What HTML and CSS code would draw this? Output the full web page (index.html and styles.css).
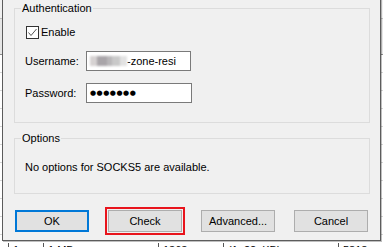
FILE: index.html
```html
<!DOCTYPE html>
<html>
<head>
<meta charset="utf-8">
<link rel="stylesheet" href="styles.css">
</head>
<body>
<div class="desk">
  <div class="bgwin">
    <div class="band top"></div>
    <div class="band mid"></div>
    <div class="row"></div>
    <div class="row"></div>
    <div class="row"></div>
    <div class="row"></div>
    <div class="row"></div>
    <div class="row"></div>
    <div class="row"></div>
    <div class="row"></div>
    <div class="row"></div>
    <div class="row"></div>
    <div class="row cells">
      <span class="cell c1">1</span>
      <span class="cell c2">1 MB</span>
      <span class="cell c3">1363</span>
      <span class="cell c4">(1, 22, KB)</span>
      <span class="cell c5">5818</span>
    </div>
  </div>

  <div class="dialog">
    <fieldset class="group auth">
      <legend>Authentication</legend>
      <div class="auth-body">
        <label class="check">
          <span class="box"><svg width="11" height="11" viewBox="0 0 11 11"><polyline points="1.5,5.5 4,8.5 9.5,2" fill="none" stroke="#555" stroke-width="1"/></svg></span>
          <span>Enable</span>
        </label>
        <div class="field">
          <span class="lbl">Username:</span>
          <div class="input"><span class="blur"></span><span>-zone-resi</span></div>
        </div>
        <div class="field">
          <span class="lbl">Password:</span>
          <div class="input pw">●●●●●●●</div>
        </div>
      </div>
    </fieldset>

    <fieldset class="group opts">
      <legend>Options</legend>
      <p class="note">No options for SOCKS5 are available.</p>
    </fieldset>

    <div class="buttons">
      <button class="btn default">OK</button>
      <button class="btn marked">Check</button>
      <button class="btn">Advanced...</button>
      <button class="btn">Cancel</button>
    </div>
  </div>
</div>
</body>
</html>
```

FILE: styles.css
```css
html, body {
  margin: 0;
  padding: 0;
}
body {
  width: 383px;
  height: 247px;
  overflow: hidden;
  background: #fff;
  font: 11px "Liberation Sans", Arial, sans-serif;
  color: #000;
}
.desk {
  position: relative;
  width: 383px;
  height: 247px;
  overflow: hidden;
}

/* background window */
.bgwin {
  display: flex;
  flex-direction: column;
  height: 247px;
}
.band.top {
  height: 18px;
  background: #f0f0f0;
  border-bottom: 1px solid #bdbdbd;
  flex: none;
}
.band.mid {
  height: 35px;
  background: #e6e6e6;
  border-bottom: 1px solid #8c8c8c;
  flex: none;
}
.row {
  height: 17px;
  border-bottom: 1px solid #d6d6d6;
  flex: none;
}
.row.cells {
  display: flex;
  font-size: 11px;
  line-height: 14px;
  height: auto;
  padding-top: 8px;
  border-bottom: none;
}
.cell {
  border-left: 1px solid #555;
  padding-left: 4px;
  height: 14px;
}
.c1 { width: 10px; margin-left: 8px; }
.c2 { width: 60px; margin-left: 20px; }
.c3 { width: 50px; margin-left: 50px; }
.c4 { width: 70px; margin-left: 10px; }
.c5 { width: 40px; margin-left: 40px; }

/* dialog */
.dialog {
  position: absolute;
  left: 2px;
  top: -20px;
  width: 356px;
  padding: 20px 10px 8px 11px;
  background: #f0f0f0;
  border: 1px solid #5c5c5c;
  box-shadow: 1px 1px 0 rgba(0,0,0,0.25);
}
.group {
  margin: 0;
  padding: 0;
  border: 1px solid #dcdcdc;
  min-width: 0;
}
.group legend {
  margin-left: 6px;
  padding: 0 1px;
  line-height: 14px;
  color: #000;
}
.auth-body {
  padding: 11px 10px 19px 10px;
}
.check {
  display: flex;
  align-items: center;
  height: 13px;
  line-height: 13px;
  margin-left: 1px;
}
.box {
  width: 11px;
  height: 11px;
  border: 1px solid #333;
  background: #fff;
  margin-right: 2px;
  display: flex;
}
.field {
  display: flex;
  align-items: center;
  margin-top: 12px;
}
.lbl {
  width: 61px;
}
.input {
  width: 101px;
  height: 18px;
  border: 1px solid #7a7a7a;
  background: #fff;
  padding-left: 2px;
  display: flex;
  align-items: center;
  line-height: 14px;
}
.blur {
  width: 37px;
  height: 10px;
  margin-left: 1px;
  background: linear-gradient(to right,
    #d6d2d2 0, #d6d2d2 7px,
    #a9a5a9 7px, #a9a5a9 17px,
    #b9b7b9 17px, #b9b7b9 22px,
    #c9c9c9 22px, #c9c9c9 30px,
    #e2e2e2 30px, #e2e2e2 37px);
  filter: blur(0.8px);
}
.pw {
  font-family: "DejaVu Sans", sans-serif;
  font-size: 7px;
  letter-spacing: 0.5px;
  padding-left: 3px;
}
.opts {
  margin-top: 8px;
}
.note {
  margin: 0;
  padding: 15px 10px 19px 10px;
  line-height: 14px;
}
.buttons {
  display: flex;
  gap: 19px;
  margin-top: 16px;
  padding-left: 1px;
}
.btn {
  width: 74px;
  height: 22px;
  padding: 0;
  margin: 0;
  background: #e1e1e1;
  border: 1px solid #adadad;
  border-radius: 0;
  font: 11px "Liberation Sans", Arial, sans-serif;
  color: #000;
}
.btn.default {
  border: 2px solid #0078d7;
}
.btn.marked {
  outline: 2px solid #e8141c;
  outline-offset: 1px;
}
```
